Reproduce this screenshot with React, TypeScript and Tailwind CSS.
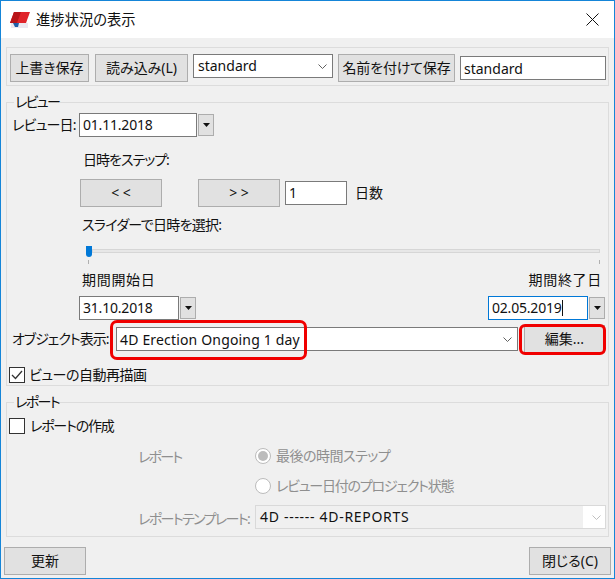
import React from 'react';

const Btn = ({ className = '', children }: { className?: string; children: React.ReactNode }) => (
  <div className={`flex items-center justify-center h-[28px] bg-[#e1e1e1] border border-[#adadad] ${className}`}>{children}</div>
);

const Field = ({ className = '', children }: { className?: string; children?: React.ReactNode }) => (
  <div className={`flex items-center h-[24px] pl-[3px] bg-white border border-[#7a7a7a] ${className}`}>{children}</div>
);

const Chevron = ({ color = '#606060' }: { color?: string }) => (
  <svg width="9" height="5" viewBox="0 0 9 5" fill="none" stroke={color} strokeWidth="1"><path d="M0.5 0.5 L4.5 4.5 L8.5 0.5" /></svg>
);

// date picker drop button
const DropBtn = () => (
  <div className="flex items-center justify-center w-[16px] h-[22px] ml-px bg-[#e1e1e1] border border-[#adadad]">
    <svg width="7" height="4" viewBox="0 0 7 4"><path d="M0 0 H7 L3.5 4 Z" fill="#111" /></svg>
  </div>
);

const Group = ({ title, className = '', children }: { title: string; className?: string; children: React.ReactNode }) => (
  <fieldset className={`border border-[#dcdcdc] ${className}`}>
    <legend className="ml-[7px] px-[1px] h-[20px] leading-[20px] tracking-[-1.6px]">{title}</legend>
    {children}
  </fieldset>
);

const Check = ({ checked = false }: { checked?: boolean }) => (
  <div className="flex items-center justify-center w-[16px] h-[16px] bg-white border border-[#333333]">
    {checked && (
      <svg width="12" height="10" viewBox="0 0 12 10" fill="none" stroke="#333" strokeWidth="1.3"><path d="M1 5 L4.5 8.5 L11 1" /></svg>
    )}
  </div>
);

const Radio = ({ checked = false }: { checked?: boolean }) => (
  <div className="flex items-center justify-center w-[16px] h-[16px] rounded-full bg-white border border-[#bcbcbc]">
    {checked && <div className="w-[10px] h-[10px] rounded-full bg-[#bcbcbc]" />}
  </div>
);

export default function App() {
  return (
    <div className="w-[615px] h-[579px] flex flex-col bg-[#f0f0f0] border border-[#1585d8] text-[14px] leading-[20px] text-[#111111] font-['Noto_Sans','Noto_Sans_CJK_JP',sans-serif] [font-feature-settings:'palt'] whitespace-nowrap overflow-hidden">
      {/* タイトルバー */}
      <div className="flex items-center h-[37px] bg-white shrink-0">
        <svg className="ml-[9px]" width="20" height="18" viewBox="0 0 20 18">
          <path d="M1 12 H18 V17 H1 Z" fill="#ece8f0" />
          <path d="M3 12 H9 L8 16 H5 Z" fill="#1f5fa8" />
          <path d="M4 1 H20 L16 12 H0 Z" fill="#e0242a" />
          <path d="M4 1 H11 L7 12 H0 Z" fill="#b81418" />
        </svg>
        <span className="ml-[6px] text-[14.3px]">進捗状況の表示</span>
        <svg className="ml-auto mr-[15px]" width="13" height="13" viewBox="0 0 13 13" stroke="#111" strokeWidth="1"><path d="M0.5 0.5 L12.5 12.5 M12.5 0.5 L0.5 12.5" /></svg>
      </div>

      <div className="flex flex-col px-[5px]">
        {/* 設定の保存 */}
        <div className="flex items-start h-[39px] mt-[9px] pl-[3px] pt-[6px] border border-[#dcdcdc]">
          <Btn className="w-[79px]">上書き保存</Btn>
          <Btn className="w-[93px] ml-[6px]">読み込み(L)</Btn>
          <Field className="w-[140px] ml-[5px] justify-between pr-[5px]">
            <span className="-mt-[1px] ml-px">standard</span>
            <Chevron />
          </Field>
          <Btn className="w-[117px] ml-[5px] tracking-[-0.2px]">名前を付けて保存</Btn>
          <Field className="w-[146px] ml-[5px] mt-[2px]"><span className="mt-px">standard</span></Field>
        </div>

        {/* レビュー */}
        <Group title="レビュー" className="h-[294px] mt-[6px]">
          <div className="flex items-center mt-[1px] pl-[5px]">
            <span className="w-[67px] tracking-[-0.8px]">レビュー日:</span>
            <Field className="w-[118px] pl-[2px] tracking-[-0.2px]">01.11.2018</Field>
            <DropBtn />
          </div>
          <div className="mt-[13px] ml-[76px] tracking-[-1px]">日時をステップ:</div>
          <div className="flex items-center mt-[9px] ml-[73px]">
            <Btn className="w-[82px]">&lt; &lt;</Btn>
            <Btn className="w-[82px] ml-[36px]">&gt; &gt;</Btn>
            <Field className="w-[62px] ml-[5px]">1</Field>
            <span className="ml-[8px]">日数</span>
          </div>
          <div className="mt-[8px] ml-[75px] tracking-[-0.7px]">スライダーで日時を選択:</div>
          {/* スライダー */}
          <div className="flex flex-col ml-[78px] mr-[8px] mt-[11px]">
            <div className="flex items-start h-[11px]">
              <div className="w-[6px] h-[11px] bg-[#0078d7] rounded-b-[3px] ml-px shrink-0" />
              <div className="flex-1 h-[4px] mt-[3px] bg-[#e7e7e7] border border-[#d6d6d6]" />
            </div>
            <div className="flex justify-between mt-[3px] pl-[3px] pr-[0px]">
              <div className="w-px h-[4px] bg-[#b0b0b0]" />
              <div className="w-px h-[4px] bg-[#b0b0b0]" />
            </div>
          </div>
          <div className="flex justify-between mt-[6px] ml-[75px] mr-[6px] tracking-[0.7px]">
            <span>期間開始日</span>
            <span>期間終了日</span>
          </div>
          <div className="flex items-center justify-between mt-[6px] ml-[72px] mr-[3px]">
            <div className="flex items-center">
              <Field className="w-[100px] pl-[2px] tracking-[-0.2px]">31.10.2018</Field>
              <DropBtn />
            </div>
            <div className="flex items-center">
              <Field className="w-[100px] pl-[2px] tracking-[-0.2px] !border-[#0078d7]">
                02.05.2019<span className="w-px h-[16px] bg-[#111111]" />
              </Field>
              <DropBtn />
            </div>
          </div>
          {/* オブジェクト表示 */}
          <div className="relative flex items-center h-[24px] mt-[7px] pl-[5px]">
            <span className="w-[104px] shrink-0 tracking-[-1px]">オブジェクト表示:</span>
            <Field className="w-[402px] justify-between pr-[5px]">
              <span className="mt-px tracking-[0.17px]">4D Erection Ongoing 1 day</span>
              <Chevron />
            </Field>
            <Btn className="w-[81px] h-[25px] ml-[6px]">編集...</Btn>
            <div className="absolute left-[103px] top-[-7px] w-[197px] h-[40px] border-[3px] border-[#f00000] rounded-[7px]" />
            <div className="absolute left-[512px] top-[-3px] w-[87px] h-[31px] border-[3px] border-[#f00000] rounded-[6px]" />
          </div>
          <div className="flex items-center mt-[14px] ml-[2px]">
            <Check checked />
            <span className="ml-[4px] tracking-[-0.5px]">ビューの自動再描画</span>
          </div>
        </Group>

        {/* レポート */}
        <Group title="レポート" className="h-[145px] mt-[6px]">
          <div className="flex items-center mt-[4px] ml-[2px]">
            <Check />
            <span className="ml-[5px] tracking-[-1.2px]">レポートの作成</span>
          </div>
          <div className="flex flex-col mt-[12px] text-[#8f8f8f]">
            <div className="flex items-center h-[16px]">
              <span className="w-[248px] pl-[131px] shrink-0 tracking-[-1.8px] mt-px">レポート</span>
              <Radio checked />
              <span className="ml-[5px] tracking-[-0.5px]">最後の時間ステップ</span>
            </div>
            <div className="flex items-center h-[16px] mt-[14px] pl-[248px]">
              <Radio />
              <span className="ml-[5px] tracking-[-1.2px]">レビュー日付のプロジェクト状態</span>
            </div>
            <div className="flex items-center mt-[11px]">
              <span className="w-[248px] pl-[131px] shrink-0 tracking-[-1.6px] mt-[3px]">レポートテンプレート:</span>
              <div className="flex w-[351px] h-[24px] border border-[#d9d9d9] bg-white">
                <div className="flex-1 flex items-center pl-[4px] bg-[#f0f0f0] text-[#111111] tracking-[0.7px]">4D ------ 4D-REPORTS</div>
                <div className="flex items-center justify-center w-[22px] pl-[5px]"><Chevron color="#bfbfbf" /></div>
              </div>
            </div>
          </div>
        </Group>
      </div>

      <div className="flex justify-between mt-[10px] px-[3px]">
        <Btn className="w-[82px]">更新</Btn>
        <Btn className="w-[82px]">閉じる(C)</Btn>
      </div>
    </div>
  );
}
